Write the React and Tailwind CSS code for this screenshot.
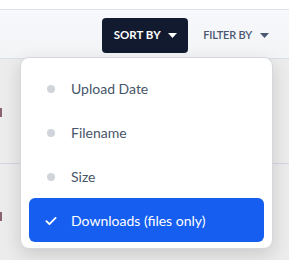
import React from "react";

const options = [
  { label: "Upload Date" },
  { label: "Filename" },
  { label: "Size" },
  { label: "Downloads (files only)", active: true },
];

function Caret({ className }) {
  return (
    <svg width="9" height="5" viewBox="0 0 9 5" className={className}>
      <path d="M0 0 H9 L4.5 5 Z" fill="currentColor" />
    </svg>
  );
}

function Check() {
  return (
    <svg width="13" height="10" viewBox="0 0 13 10" fill="none">
      <path d="M1.5 5.2 L4.8 8.4 L11.5 1.6" stroke="white" strokeWidth="2" strokeLinecap="round" strokeLinejoin="round" />
    </svg>
  );
}

// ─── Sort menu ─────────────────────────────────────────────────────
function SortMenu() {
  return (
    <div className="absolute left-[20px] top-[57px] w-[253px] bg-white border border-[#d6d8de] rounded-[9px] shadow-[0_6px_18px_rgba(0,0,0,0.14)] pt-2 pb-[6px] px-2 z-10">
      {options.map((o) => (
        <div
          key={o.label}
          className={`h-11 flex items-center gap-[14px] pl-4 pt-[1px] rounded-[6px] text-[14px] ${
            o.active ? "bg-[#155eef] text-white" : "text-[#475569]"
          }`}
        >
          <span className="w-[12px] flex items-center justify-center">
            {o.active ? <Check /> : <span className="w-2 h-2 rounded-full bg-[#d1d5db]" />}
          </span>
          <span>{o.label}</span>
        </div>
      ))}
    </div>
  );
}

export default function App() {
  return (
    <div className="relative w-[289px] h-[260px] overflow-hidden bg-[#ececed] font-['Lato',sans-serif]">
      <div className="h-[10px] bg-white border-b border-[#dde1ec]" />
      <div className="h-[49px] bg-gradient-to-b from-[#f7f8fb] to-[#f3f4f6] border-b border-[#dcdfe6] flex items-center justify-end pr-[20px]">
        <button className="w-[86px] h-[35px] rounded-[4px] bg-[#111a2e] text-white text-[11.5px] font-bold flex items-center justify-center gap-[7px] mt-[2px]">
          SORT BY
          <Caret />
        </button>
        <button className="ml-[15px] flex items-center gap-[8px] text-[#4a5772] text-[11px] font-semibold tracking-[-0.2px] mt-[2px]">
          FILTER BY
          <Caret />
        </button>
      </div>
      <div className="h-[105px] border-b border-[#d4d6e0] flex items-center">
        <div className="w-[2px] h-[9px] bg-[#8a6272] mt-[3px]" />
      </div>
      <div className="h-[95px] flex items-center">
        <div className="w-[2px] h-[9px] bg-[#8a6272] mt-[10px]" />
      </div>
      <SortMenu />
    </div>
  );
}
